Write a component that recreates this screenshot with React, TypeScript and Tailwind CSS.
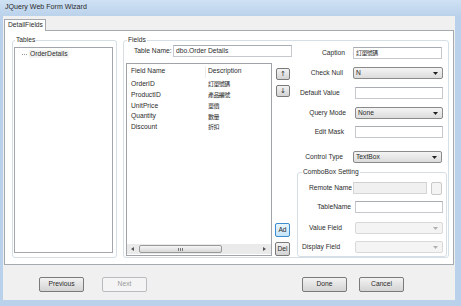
import type React from "react"

const cjk = "font-['Noto_Sans_CJK_TC',sans-serif] text-[6px] tracking-[-0.6px]"

function TextBox({ w, children, disabled }: { w: string; children?: React.ReactNode; disabled?: boolean }) {
  return (
    <div
      className={`${w} h-[12px] flex items-center pl-[2px] border border-[#c5c8cd] border-t-[#a9acb2] ${
        disabled ? "bg-[#f0f0f0] border-[#d6d6d6] border-t-[#d0d0d0]" : "bg-white"
      }`}
    >
      {children}
    </div>
  )
}

function Arrow({ color }: { color: string }) {
  return (
    <svg width="5" height="3" viewBox="0 0 5 3" className="shrink-0">
      <path d="M0 0 L5 0 L2.5 3 Z" fill={color} />
    </svg>
  )
}

function Combo({ w, value, disabled }: { w: string; value?: string; disabled?: boolean }) {
  return (
    <div
      className={`${w} h-[12px] flex items-center justify-between pl-[2px] pr-[4px] rounded-[2px] border ${
        disabled
          ? "bg-[#f4f4f4] border-[#d9d9d9]"
          : "bg-gradient-to-b from-[#f4f4f4] to-[#dcdcdc] border-[#8a8a8a]"
      }`}
    >
      <span>{value}</span>
      <Arrow color={disabled ? "#b0b0b0" : "#202020"} />
    </div>
  )
}

function Btn({ w, h, children, disabled, focus }: { w: string; h: string; children: React.ReactNode; disabled?: boolean; focus?: boolean }) {
  let cls = "bg-gradient-to-b from-[#f3f3f3] to-[#d3d3d3] border-[#7a7a7a]"
  if (disabled) cls = "bg-[#f4f4f4] border-[#b8bcbf] text-[#9a9a9a]"
  if (focus) cls = "bg-gradient-to-b from-[#eaf6fd] to-[#c4e4f7] border-[#3c8ccf]"
  return (
    <div className={`${w} ${h} shrink-0 flex items-center justify-center rounded-[2px] border ${cls}`}>
      {children}
    </div>
  )
}

const fields: [string, string][] = [
  ["OrderID", "訂單號碼"],
  ["ProductID", "產品編號"],
  ["UnitPrice", "單價"],
  ["Quantity", "數量"],
  ["Discount", "折扣"],
]

export default function App() {
  return (
    <div className="w-[461px] h-[306px] bg-[#b9d1ea] flex flex-col font-['Liberation_Sans',Arial,sans-serif] text-[6.7px] text-[#2b2b2b] leading-none overflow-hidden">
      <div className="h-[16px] shrink-0 bg-gradient-to-b from-[#cfe1f4] to-[#bad2eb] flex items-center pl-[5px] text-[7.1px] text-[#2a2a2a]">
        JQuery Web Form Wizard
      </div>

      <div className="flex-1 ml-[3px] mr-[6px] mb-[6px] bg-[#f0f0f0] flex flex-col">
        <div className="h-[14px] shrink-0 flex items-end pl-[1px]">
          <div className="relative top-[1px] z-10 h-[12px] w-[42px] bg-white border border-b-0 border-[#a5a9b0] flex items-center pl-[3px]">
            DetailFields
          </div>
        </div>

        <div className="ml-[1px] w-[450px] h-[235px] shrink-0 border border-[#a5a9b0] bg-white flex pl-[7px] pt-[5px]">
          {/* Tables */}
          <fieldset className="w-[105px] h-[222px] border border-[#d5dfe5] rounded-[3px]">
            <legend className="ml-[2px] px-[1px] leading-[8px]">Tables</legend>
            <div className="mt-[3px] ml-[1px] w-[99px] h-[206px] border border-[#a3a7ad] bg-white pt-[2px]">
              <div className="flex items-center h-[8px]">
                <div className="ml-[7px] w-[5px] border-t border-dotted border-[#9a9a9a]" />
                <span className="ml-[2px] px-[1px] bg-[#f2f2f2] leading-[8px]">OrderDetails</span>
              </div>
            </div>
          </fieldset>

          {/* Fields */}
          <fieldset className="ml-[6px] w-[326px] h-[222px] border border-[#d5dfe5] rounded-[3px]">
            <legend className="ml-[3px] px-[1px] leading-[8px]">Fields</legend>
            <div className="flex">
              {/* left column */}
              <div className="ml-[2px] w-[166px] flex flex-col">
                <div className="mt-[1px] h-[12px] flex items-center">
                  <div className="w-[47px] pl-[8px]">Table Name:</div>
                  <TextBox w="w-[119px]">dbo.Order Details</TextBox>
                </div>
                <div className="mt-[6px] flex">
                  <div className="w-[146px] h-[193px] border border-[#a0a4aa] bg-white flex flex-col">
                    <div className="h-[15px] flex items-center shrink-0">
                      <div className="w-[78px] pl-[4px]">Field Name</div>
                      <div className="border-l border-[#ececec] h-[12px] flex items-center pl-[2px]">Description</div>
                    </div>
                    <div className="flex flex-col">
                      {fields.map(([name, desc]) => (
                        <div key={name} className="h-[10.75px] flex items-center">
                          <div className="w-[78px] pl-[4px]">{name}</div>
                          <div className={`pl-[3px] ${cjk}`}>{desc}</div>
                        </div>
                      ))}
                    </div>
                    <div className="flex-1" />
                    <div className="h-[10px] mb-[1px] bg-[#eaeaea] flex items-center">
                      <svg width="3" height="4" viewBox="0 0 3 4" className="ml-[4px]">
                        <path d="M3 0 L0 2 L3 4 Z" fill="#555" />
                      </svg>
                      <div className="ml-[5px] w-[83px] h-[8px] rounded-[2px] border border-[#999] bg-gradient-to-b from-[#f6f6f6] to-[#d8d8d8] flex items-center justify-center">
                        <div className="flex gap-[1px]">
                          <div className="w-px h-[3px] bg-[#777]" />
                          <div className="w-px h-[3px] bg-[#777]" />
                          <div className="w-px h-[3px] bg-[#777]" />
                        </div>
                      </div>
                      <div className="flex-1" />
                      <svg width="3" height="4" viewBox="0 0 3 4" className="mr-[5px]">
                        <path d="M0 0 L3 2 L0 4 Z" fill="#555" />
                      </svg>
                    </div>
                  </div>
                  <div className="ml-[3px] w-[15px] h-[193px] flex flex-col items-end">
                    <div className="mt-[5px]">
                      <Btn w="w-[14px]" h="h-[12px]"><span className="font-['DejaVu_Sans',sans-serif] text-[7px]">↑</span></Btn>
                    </div>
                    <div className="mt-[5px]">
                      <Btn w="w-[14px]" h="h-[12px]"><span className="font-['DejaVu_Sans',sans-serif] text-[7px]">↓</span></Btn>
                    </div>
                    <div className="flex-1" />
                    <Btn w="w-[15px]" h="h-[14px]" focus>Ad</Btn>
                    <div className="mt-[5px]">
                      <Btn w="w-[15px]" h="h-[14px]">Del</Btn>
                    </div>
                  </div>
                </div>
              </div>

              {/* right column */}
              <div className="ml-[5px] w-[150px] flex flex-col">
                <div className="mt-[3px] h-[12px] flex items-center">
                  <div className="w-[48px] text-right">Caption</div>
                  <div className="ml-[8px]">
                    <TextBox w="w-[89px]"><span className={cjk}>訂單號碼</span></TextBox>
                  </div>
                </div>
                <div className="mt-[8px] h-[12px] flex items-center">
                  <div className="w-[46px] text-right">Check Null</div>
                  <div className="ml-[10px]"><Combo w="w-[90px]" value="N" /></div>
                </div>
                <div className="mt-[8px] h-[12px] flex items-center">
                  <div className="w-[58px] pl-[3px]">Default Value</div>
                  <TextBox w="w-[88px]" />
                </div>
                <div className="mt-[8px] h-[12px] flex items-center">
                  <div className="w-[49px] text-right">Query Mode</div>
                  <div className="ml-[9px]"><Combo w="w-[88px]" value="None" /></div>
                </div>
                <div className="mt-[7px] h-[12px] flex items-center">
                  <div className="w-[47px] text-right">Edit Mask</div>
                  <div className="ml-[11px]"><TextBox w="w-[88px]" /></div>
                </div>
                <div className="mt-[13px] h-[12px] flex items-center">
                  <div className="w-[46px] text-right">Control Type</div>
                  <div className="ml-[10px]"><Combo w="w-[89px]" value="TextBox" /></div>
                </div>

                <fieldset className="mt-[5px] w-[150px] h-[89px] border border-[#d5dfe5] rounded-[3px]">
                  <legend className="ml-[4px] px-[1px] leading-[8px]">ComboBox Setting</legend>
                  <div className="mt-[6px] h-[12px] flex items-center">
                    <div className="w-[54px] text-right">Remote Name</div>
                    <div className="ml-[1px]"><TextBox w="w-[74px]" disabled /></div>
                    <div className="ml-[4px] w-[11px] h-[13px] rounded-[2px] border border-[#c9c9c9] bg-[#f4f4f4]" />
                  </div>
                  <div className="mt-[7px] h-[12px] flex items-center">
                    <div className="w-[53px] text-right">TableName</div>
                    <div className="ml-[4px]"><TextBox w="w-[88px]" /></div>
                  </div>
                  <div className="mt-[9px] h-[12px] flex items-center">
                    <div className="w-[57px] pl-[11px]">Value Field</div>
                    <Combo w="w-[88px]" disabled />
                  </div>
                  <div className="mt-[7px] h-[12px] flex items-center">
                    <div className="w-[57px] pl-[4px]">Display Field</div>
                    <Combo w="w-[88px]" disabled />
                  </div>
                </fieldset>
              </div>
            </div>
          </fieldset>
        </div>

        <div className="flex pt-[12px]">
          <div className="ml-[36px]"><Btn w="w-[45px]" h="h-[15px]">Previous</Btn></div>
          <div className="ml-[18px]"><Btn w="w-[45px]" h="h-[15px]" disabled>Next</Btn></div>
          <div className="ml-[155px]"><Btn w="w-[45px]" h="h-[15px]">Done</Btn></div>
          <div className="ml-[12px]"><Btn w="w-[45px]" h="h-[15px]">Cancel</Btn></div>
        </div>
      </div>
    </div>
  )
}
